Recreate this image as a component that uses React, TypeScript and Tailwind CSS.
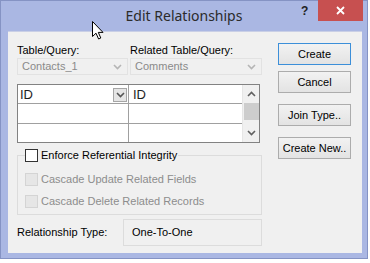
import React from "react";

// small chevron used by combo boxes, grid dropdown and scrollbar
function Chevron({ up = false, color = "#606060" }: { up?: boolean; color?: string }) {
  return (
    <svg width="9" height="6" viewBox="0 0 9 6">
      <polyline
        points={up ? "1,5 4.5,1.5 8,5" : "1,1 4.5,4.5 8,1"}
        fill="none"
        stroke={color}
        strokeWidth="1.6"
      />
    </svg>
  );
}

function DisabledCombo({ value, className }: { value: string; className: string }) {
  return (
    <div
      className={`h-[17px] flex items-center justify-between pl-[4px] pr-[5px] border border-[#e2e2e2] bg-[#f0f0f0] text-[#8a8a8a] ${className}`}
    >
      <span>{value}</span>
      <Chevron color="#b5b5b5" />
    </div>
  );
}

function WinButton({ label, focused = false }: { label: string; focused?: boolean }) {
  return (
    <button
      className={`h-[22px] w-[73px] flex items-center justify-center border bg-gradient-to-b from-[#f2f2f2] to-[#e3e3e3] text-black ${
        focused ? "border-[#3c8fd9]" : "border-[#acacac]"
      }`}
    >
      {label}
    </button>
  );
}

function CheckRow({ label, disabled = false }: { label: string; disabled?: boolean }) {
  return (
    <div className="flex items-center gap-[3px]">
      <span
        className={`w-[13px] h-[13px] border ${
          disabled ? "border-[#d4d4d4] bg-[#e6e6e6]" : "border-[#333] bg-white"
        }`}
      />
      <span className={disabled ? "text-[#8d8d8d]" : "text-black"}>{label}</span>
    </div>
  );
}

const rows = [
  { left: "ID", right: "ID", active: true },
  { left: "", right: "", active: false },
  { left: "", right: "", active: false },
];

export default function App() {
  return (
    <div className="w-[370px] h-[263px] bg-white relative font-['Liberation_Sans',Arial,sans-serif] text-[11px] leading-[13px]">
      <div className="w-[368px] h-[259px] bg-[#aab7e3] border border-[#8593c4] flex flex-col">
        {/* title bar */}
        <div className="h-[30px] relative flex items-center justify-center">
          <span className="font-['Noto_Sans',sans-serif] text-[14px] text-[#2b2b2b] leading-none -mt-[1px]">
            Edit Relationships
          </span>
          <span className="absolute left-[300px] top-[4px] font-bold text-[12px] text-[#222]">?</span>
          <div className="absolute left-[317px] -top-[1px] w-[45px] h-[21px] bg-[#c75050] flex items-center justify-center">
            <svg width="9" height="9" viewBox="0 0 9 9">
              <path d="M1 1 L8 8 M8 1 L1 8" stroke="#fff" strokeWidth="1.8" />
            </svg>
          </div>
        </div>

        {/* client area */}
        <div className="flex-1 ml-[7px] mr-[5px] mb-[5px] bg-[#f0f0f0] border-t border-[#c9cfe6] flex pl-[9px] pr-[11px]">
          <div className="w-[245px] flex flex-col pt-[12px]">
            <div className="flex">
              <span className="w-[113px]">Table/Query:</span>
              <span>Related Table/Query:</span>
            </div>
            <div className="flex gap-[2px] mt-[1px]">
              <DisabledCombo value="Contacts_1" className="w-[111px]" />
              <DisabledCombo value="Comments" className="w-[132px]" />
            </div>

            {/* field grid */}
            <div className="mt-[9px] w-[243px] h-[59px] border border-[#828282] bg-white flex">
              <div className="flex-1 flex flex-col">
                {rows.map((r, i) => (
                  <div
                    key={i}
                    className={`flex-1 flex ${i < rows.length - 1 ? "border-b border-[#a0a0a0]" : ""}`}
                  >
                    <div className="w-[111px] border-r border-[#a0a0a0] flex items-center justify-between pl-[2px] pr-[1px]">
                      <span className="text-[13px] text-[#1e1e1e]">{r.left}</span>
                      {r.active && (
                        <span className="w-[14px] h-[14px] mt-[2px] border border-[#a6a6a6] bg-[#e5e5e5] flex items-center justify-center">
                          <Chevron color="#555" />
                        </span>
                      )}
                    </div>
                    <div className="flex-1 flex items-center pl-[4px]">
                      <span className="text-[13px] text-[#1e1e1e]">{r.right}</span>
                    </div>
                  </div>
                ))}
              </div>
              {/* scrollbar */}
              <div className="w-[17px] bg-[#f0f0f0] flex flex-col items-center border-l border-[#e6e6e6]">
                <div className="h-[18px] flex items-center justify-center">
                  <Chevron up />
                </div>
                <div className="w-[15px] h-[17px] bg-[#cdcdcd]" />
                <div className="flex-1" />
                <div className="h-[18px] flex items-center justify-center">
                  <Chevron />
                </div>
              </div>
            </div>

            {/* referential integrity group */}
            <fieldset className="mt-[6px] border border-[#dcdcdc] pl-[7px] pt-[6px] pb-[2px] flex flex-col">
              <legend className="px-0 pr-[1px]">
                <CheckRow label="Enforce Referential Integrity" />
              </legend>
              <div className="h-[22px] flex items-center">
                <CheckRow label="Cascade Update Related Fields" disabled />
              </div>
              <div className="h-[22px] flex items-center">
                <CheckRow label="Cascade Delete Related Records" disabled />
              </div>
            </fieldset>

            <div className="mt-[4px] flex items-center">
              <span className="w-[106px]">Relationship Type:</span>
              <div className="w-[139px] h-[27px] border border-[#dcdcdc] flex items-center pl-[8px]">
                One-To-One
              </div>
            </div>
          </div>

          {/* buttons */}
          <div className="ml-[16px] flex flex-col pt-[11px]">
            <WinButton label="Create" focused />
            <div className="mt-[6px]">
              <WinButton label="Cancel" />
            </div>
            <div className="mt-[11px]">
              <WinButton label="Join Type.." />
            </div>
            <div className="mt-[11px]">
              <WinButton label="Create New.." />
            </div>
          </div>
        </div>
      </div>

      {/* mouse pointer */}
      <svg className="absolute left-[92px] top-[21px]" width="12" height="19" viewBox="0 0 12 19">
        <path
          d="M0.5 0.5 L0.5 15.5 L4 12.2 L6.6 18 L8.8 17 L6.3 11.4 L11 11.4 Z"
          fill="#fff"
          stroke="#000"
          strokeWidth="1"
          strokeLinejoin="round"
        />
      </svg>
    </div>
  );
}
